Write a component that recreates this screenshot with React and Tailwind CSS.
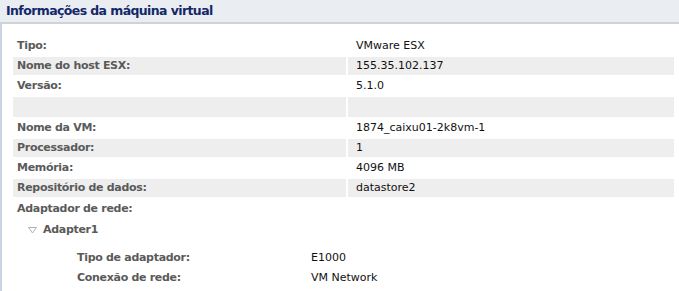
import React from 'react';

const rows = [
  { label: 'Tipo:', value: 'VMware ESX' },
  { label: 'Nome do host ESX:', value: '155.35.102.137', shaded: true },
  { label: 'Versão:', value: '5.1.0' },
  { label: '', value: '', shaded: true, blank: true },
  { label: 'Nome da VM:', value: '1874_caixu01-2k8vm-1' },
  { label: 'Processador:', value: '1', shaded: true },
  { label: 'Memória:', value: '4096 MB' },
  { label: 'Repositório de dados:', value: 'datastore2', shaded: true },
];

const font = { fontFamily: '"DejaVu Sans", Verdana, sans-serif' };

const App = () => {
  return (
    <div className="w-[679px] h-[291px] bg-white overflow-hidden" style={font}>
      <header className="h-[24px] bg-[#eaeef2] border-b-2 border-[#cfd3d7] flex items-center pl-[6px]">
        <h1 className="text-[12.5px] font-bold text-[#142868] tracking-[-0.6px]">Informações da máquina virtual</h1>
      </header>

      <main className="border-l-2 border-[#c9d5e2] h-[267px] pl-[11px] pt-[13px] pr-[5px]">
        <div className="flex flex-col gap-[2px]">
          {rows.map((row, i) => (
            <div key={i} className={`flex gap-[2px] ${row.blank ? 'h-[20px]' : 'h-[18px]'}`}>
              <div className={`w-[333px] flex items-center pl-[4px] text-[11px] font-bold text-[#5a5a5a] tracking-[-0.3px] ${row.shaded ? 'bg-[#eeeeee]' : ''}`}>
                {row.label}
              </div>
              <div className={`flex-1 flex items-center pl-[8px] text-[11px] text-[#111111] ${row.shaded ? 'bg-[#eeeeee]' : ''}`}>
                {row.value}
              </div>
            </div>
          ))}
        </div>

        <div className="h-[20px] mt-[2px] flex items-center pl-[4px] text-[11px] font-bold text-[#5a5a5a] tracking-[-0.3px]">
          Adaptador de rede:
        </div>

        <div className="h-[22px] flex items-center pl-[15px] gap-[6px] text-[11px] font-bold text-[#5a5a5a] tracking-[-0.3px]">
          <svg width="9" height="7" viewBox="0 0 9 7">
            <path d="M0.5 0.5 L8.5 0.5 L4.5 6 Z" fill="none" stroke="#b0b0b0" strokeWidth="1" />
          </svg>
          <span>Adapter1</span>
        </div>

        <div className="mt-[7px] pl-[64px] flex flex-col">
          {[
            { label: 'Tipo de adaptador:', value: 'E1000' },
            { label: 'Conexão de rede:', value: 'VM Network' },
          ].map((row, i) => (
            <div key={i} className="h-[20px] flex items-center text-[11px]">
              <div className="w-[234px] font-bold text-[#5a5a5a] tracking-[-0.3px]">{row.label}</div>
              <div className="text-[#111111]">{row.value}</div>
            </div>
          ))}
        </div>
      </main>
    </div>
  );
};

export default App;
